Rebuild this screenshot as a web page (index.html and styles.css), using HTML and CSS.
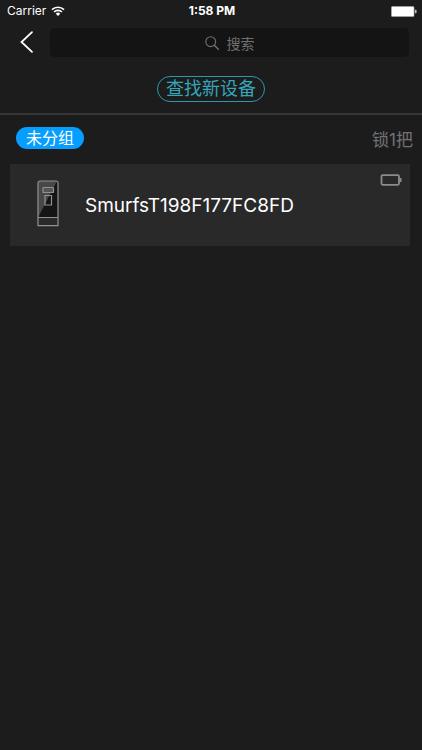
FILE: index.html
```html
<!DOCTYPE html>
<html lang="zh-CN">
<head>
<meta charset="utf-8">
<meta name="viewport" content="width=device-width, initial-scale=1">
<title>搜索</title>
<link rel="stylesheet" href="styles.css">
</head>
<body>
<div class="status">
  <div class="carrier">
    <span>Carrier</span>
    <svg width="14" height="10" viewBox="0 0 14 10" fill="none" stroke="#fff" stroke-width="1.7" aria-hidden="true">
      <path d="M1 3.7a8.6 8.6 0 0 1 12 0M3.1 6a5.5 5.5 0 0 1 7.8 0"/>
      <path d="M4.8 7.7a3.1 3.1 0 0 1 4.4 0L7 10z" fill="#fff" stroke="none"/>
    </svg>
  </div>
  <time class="clock">1:58 PM</time>
  <svg class="power" width="26" height="11" viewBox="0 0 26 11" aria-hidden="true">
    <rect x="0.4" y="0.4" width="22.6" height="10.2" rx="1.2" fill="#fff" stroke="#aaa" stroke-width=".6"/>
    <path d="M23.8 3.8h1a.8.8 0 0 1 .8.8v1.8a.8.8 0 0 1-.8.8h-1z" fill="#bbb"/>
  </svg>
</div>
<header class="nav">
  <button class="back" type="button" aria-label="返回">
    <svg width="14" height="24" viewBox="0 0 14 24" fill="none" stroke="#fff" stroke-width="1.8" stroke-linecap="round" aria-hidden="true"><path d="M12 2.200 1.500 12 12 21.800"/></svg>
  </button>
  <label class="search">
    <svg width="14" height="14" viewBox="0 0 14 14" fill="none" stroke="#707072" stroke-width="1.1" stroke-linecap="round" aria-hidden="true"><circle cx="5.7" cy="5.7" r="4.9"/><path d="m9.300 9.300 4 4" stroke-width="1.4"/></svg>
    <input type="search" placeholder="搜索" aria-label="搜索">
  </label>
</header>
<div class="actions">
  <button class="find" type="button">查找新设备</button>
</div>
<main>
  <div class="group">
    <h2 class="tag">未分组</h2>
    <span class="count">锁1把</span>
  </div>
  <a class="device" href="#">
    <svg class="lock" width="22" height="47" viewBox="0 0 22 47" fill="none" stroke="#929292" aria-hidden="true">
      <path d="M1 37.500V3a2 2 0 0 1 2-2h16a2 2 0 0 1 2 2v34.500z" fill="#151515" stroke="none"/>
      <path d="M1 37.500V3a2 2 0 0 1 2-2h17L1 37.500z" fill="#484848" stroke="none"/>
      <path d="M1 45.700V3a2 2 0 0 1 2-2h16a2 2 0 0 1 2 2v42.700zM1 37.500h20" stroke-width="1.200"/>
      <rect x="6" y="7.500" width="10.500" height="5" rx=".6" fill="#555" stroke-width="1.200"/>
      <path d="M8 15.500h6.500V25H8z" stroke-width="1.200"/>
    </svg>
    <span class="name">SmurfsT198F177FC8FD</span>
    <svg class="level" width="22" height="12" viewBox="0 0 22 12" fill="none" stroke="#8c8c8c" stroke-width="1.800" aria-hidden="true"><rect x="1.500" y="1.200" width="17.500" height="9.600" rx="1.200"/><path d="M20.500 4v4" stroke-width="2"/></svg>
  </a>
</main>
</body>
</html>
```
FILE: styles.css
```css
* {
  box-sizing: border-box;
}

body {
  margin: 0;
  min-height: 100vh;
  background: #1c1c1c;
  color: #fff;
  font-family: Inter, "Noto Sans CJK SC", sans-serif;
}

button,
input {
  margin: 0;
  padding: 0;
  border: 0;
  background: none;
  color: inherit;
  font: inherit;
}

svg {
  display: block;
  flex: none;
}

.status {
  display: grid;
  grid-template-columns: 1fr auto 1fr;
  align-items: center;
  height: 22px;
  padding: 0 5px 0 7px;
  font-size: 12px;
  line-height: 22px;
}

.carrier {
  display: flex;
  align-items: center;
  gap: 5px;
}

.clock {
  font-weight: 700;
}

.power {
  justify-self: end;
}

.nav {
  display: flex;
  align-items: center;
  padding: 6px 13px 0 0;
}

.back {
  display: flex;
  justify-content: center;
  flex: none;
  width: 50px;
  padding: 2px 0 3px 4px;
}

.search {
  display: flex;
  flex: 1;
  align-items: center;
  justify-content: center;
  gap: 8px;
  height: 29px;
  border-radius: 5px;
  background: #141414;
}

.search input {
  field-sizing: content;
  outline: 0;
  font-size: 14px;
  line-height: 20px;
  appearance: none;
}

.search input::placeholder {
  color: #707072;
}

.actions {
  display: flex;
  justify-content: center;
  padding: 19px 0 11px;
  border-bottom: 2px solid #36363a;
}

.find {
  height: 26px;
  padding: 0 8px;
  border: 1px solid #2b98ac;
  border-radius: 13px;
  color: #35a6ba;
  font-size: 18px;
  line-height: 24px;
}

.group {
  display: flex;
  align-items: center;
  justify-content: space-between;
  height: 49px;
  padding: 0 9px 3px 16px;
}

.tag {
  margin: 0;
  padding: 0 10px;
  border-radius: 11px;
  background: #069eff;
  font-size: 16px;
  font-weight: 400;
  line-height: 22px;
}

.count {
  color: #727276;
  font-size: 17px;
}

.device {
  position: relative;
  display: flex;
  align-items: center;
  gap: 26px;
  height: 82px;
  margin: 0 12px 0 10px;
  padding: 0 27px;
  background: #292929;
  color: #fff;
  text-decoration: none;
}

.lock {
  margin-bottom: 4px;
}

.name {
  font-size: 19px;
}

.level {
  position: absolute;
  top: 10px;
  right: 8px;
}
```
